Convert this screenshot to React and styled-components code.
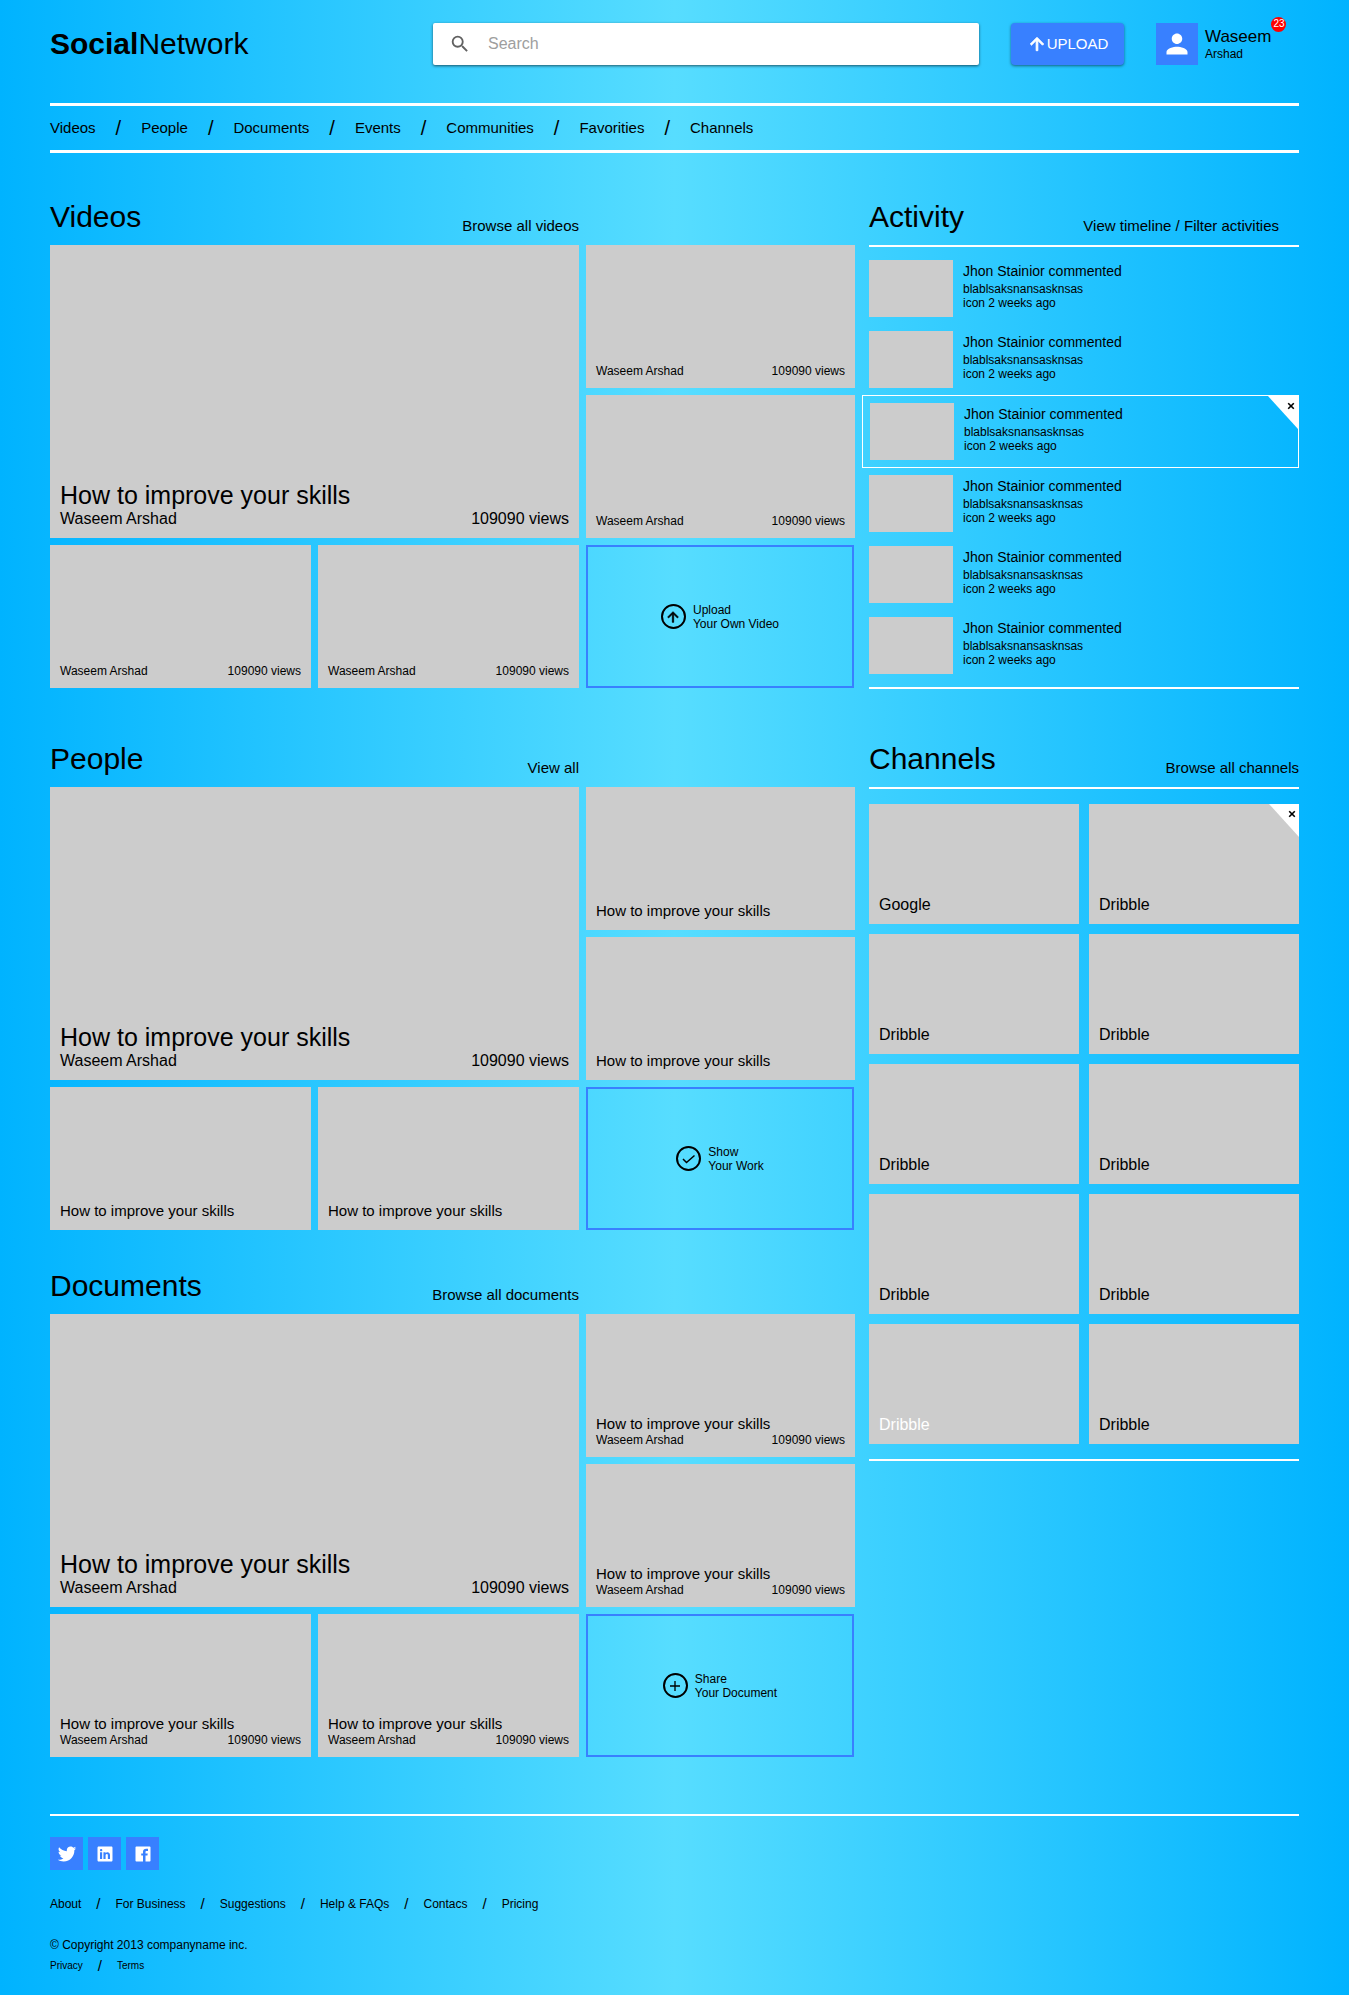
import React from 'react';
import styled, { createGlobalStyle, css } from 'styled-components';
import {
  IoMdArrowUp, IoMdPerson, IoMdAdd,
  IoLogoTwitter, IoLogoLinkedin, IoLogoFacebook,
} from 'react-icons/io';
import { MdSearch } from 'react-icons/md';

const color = { tile: '#ccc', accent: '#3880ff', line: '#fff', text: '#000' };

const GlobalStyle = createGlobalStyle`
  *, *::before, *::after { box-sizing: border-box; }
  body {
    margin: 0;
    font-family: "Liberation Sans", Arial, sans-serif;
    font-size: 16px;
    color: ${color.text};
    background: linear-gradient(to right, #00b3ff, #57ddff, #00b3ff);
  }
  a { color: inherit; text-decoration: none; }
  h1, h2, h3, p, ul { margin: 0; padding: 0; font-weight: 400; }
  ul { list-style: none; }
  button { font: inherit; color: inherit; border: 0; padding: 0; cursor: pointer; }
`;

const Page = styled.div`
  padding: 0 50px 20px;
`;

const Header = styled.header`
  display: grid;
  grid-template-columns: 351fr 546fr 113px 143px;
  gap: 32px;
  align-items: center;
  padding: 23px 0 38px;
`;

const Logo = styled.h1`
  font-size: 30px;
  line-height: 34px;
`;

const SearchBar = styled.form`
  display: flex;
  align-items: center;
  gap: 17px;
  height: 42px;
  padding: 0 16px;
  background: #fff;
  border-radius: 2px;
  box-shadow: 0 1px 3px rgba(0, 0, 0, 0.6);
  color: #616161;
  svg { flex: none; }
`;

const SearchInput = styled.input`
  flex: 1;
  min-width: 0;
  height: 40px;
  border: 0;
  outline: 0;
  padding: 0;
  background: transparent;
  font: inherit;
  &::placeholder { color: #9e9e9e; opacity: 1; }
`;

const UploadButton = styled.button`
  display: flex;
  align-items: center;
  justify-content: center;
  height: 42px;
  && { color: #fff; padding-bottom: 1px; }
  font-size: 15px;
  background: ${color.accent};
  border-radius: 4px;
  box-shadow: 0 1px 3px rgba(0, 0, 0, 0.5);
`;

const ArrowUp = styled(IoMdArrowUp)`
  stroke: currentColor;
  stroke-width: 24;
`;

const User = styled.a`
  display: flex;
  align-items: center;
  gap: 7px;
`;

const Avatar = styled.span`
  display: grid;
  place-items: center;
  width: 42px;
  height: 42px;
  color: #fff;
  background: ${color.accent};
`;

const UserName = styled.span`
  position: relative;
  font-size: 17px;
  line-height: 20px;
  small { display: block; font-size: 12px; line-height: 14px; }
`;

const Badge = styled.span`
  position: absolute;
  left: 100%;
  top: -10px;
  width: 15px;
  height: 15px;
  border-radius: 50%;
  background: red;
  color: #fff;
  font-size: 10px;
  line-height: 14px;
  text-align: center;
`;

const LinkList = styled.ul`
  display: flex;
  align-items: center;
  font-size: ${(p) => p.$size}px;
  line-height: 18px;
  li { display: flex; align-items: center; }
  li + li::before {
    content: "/";
    margin: 0 ${(p) => p.$gap}px;
    font-size: ${(p) => p.$slash}px;
  }
`;

const MainNav = styled.nav`
  border: solid ${color.line};
  border-width: 3px 0;
  padding: 13px 0;
`;

const Columns = styled.div`
  display: grid;
  grid-template-columns: 805fr 430fr;
  gap: 14px;
  align-items: start;
  padding-top: 39px;
`;

const Column = styled.div`
  display: flex;
  flex-direction: column;
`;

const Section = styled.section`
  margin-top: ${(p) => p.$space || 0}px;
`;

const Head = styled.div`
  display: flex;
  justify-content: space-between;
  align-items: flex-end;
  height: 53px;
  padding-bottom: 10px;
`;

const Title = styled.h2`
  font-size: 30px;
  line-height: 36px;
`;

const HeadLinks = styled.div`
  font-size: 15px;
  line-height: 19px;
  padding-right: ${(p) => p.$inset || 0}px;
`;

const Mosaic = styled.div`
  display: grid;
  grid-template-columns: 261fr 261fr 269fr;
  grid-auto-rows: 143px;
  gap: 7px;
`;

const MosaicHead = styled(Mosaic)`
  grid-auto-rows: auto;
  ${Head} { grid-column: span 2; }
`;

const Tile = styled.a`
  position: relative;
  display: flex;
  flex-direction: column;
  justify-content: flex-end;
  padding: 10px;
  background: ${color.tile};
  ${(p) => p.$big && css`grid-area: span 2 / span 2;`}
  ${(p) => p.$light && css`color: #fff;`}
`;

const TileTitle = styled.h3`
  font-size: ${(p) => (p.$big ? 25 : 15)}px;
  line-height: ${(p) => (p.$big ? 30 : 19)}px;
`;

const Meta = styled.p`
  display: flex;
  justify-content: space-between;
  font-size: ${(p) => (p.$big ? 16 : 12)}px;
  line-height: ${(p) => (p.$big ? 18 : 14)}px;
`;

const ActionTile = styled.button`
  display: flex;
  align-items: center;
  justify-content: center;
  gap: 7px;
  margin-right: 1px;
  text-align: left;
  background: transparent;
  && { border: 2px solid ${color.accent}; font-size: 12px; }
  line-height: 14px;
`;

const Ring = styled.span`
  display: grid;
  place-items: center;
  width: 25px;
  height: 25px;
  border: 2px solid ${color.text};
  border-radius: 50%;
`;

const Ruled = styled.div`
  border: solid ${color.line};
  border-width: 2px 0;
  padding: ${(p) => p.$pad}px 0;
`;

const ActivityItem = styled.li`
  position: relative;
  display: flex;
  gap: 10px;
  padding: 7px 0;
  ${(p) => p.$active && css`
    margin-left: -7px;
    padding: 7px;
    border: 1px solid ${color.line};
  `}
`;

const Thumb = styled.span`
  width: 84px;
  height: 57px;
  background: ${color.tile};
`;

const ActivityText = styled.div`
  padding-top: 2px;
  font-size: 12px;
  line-height: 14px;
  h3 { font-size: 14px; line-height: 18px; margin-bottom: 2px; }
`;

const CloseCorner = styled.button`
  position: absolute;
  top: 0;
  right: 0;
  width: 30px;
  height: 33px;
  display: flex;
  justify-content: flex-end;
  && { padding: 5px 2px; }
  background: #fff;
  clip-path: polygon(0 0, 100% 0, 100% 100%);
`;

const ChannelGrid = styled.ul`
  display: grid;
  grid-template-columns: 1fr 1fr;
  grid-auto-rows: 120px;
  gap: 10px;
  li { position: relative; display: grid; }
`;

const Footer = styled.footer`
  margin-top: 57px;
  padding-top: 21px;
  border-top: 2px solid ${color.line};
`;

const Socials = styled.div`
  display: flex;
  gap: 5px;
  a {
    display: grid;
    place-items: center;
    width: 33px;
    height: 33px;
    color: #fff;
    background: ${color.accent};
  }
`;

const FooterNav = styled.nav`
  padding: 25px 0;
`;

const Copyright = styled.p`
  font-size: 12px;
  line-height: 14px;
  margin-bottom: 5px;
`;

function Links({ items, ...sizes }) {
  return (
    <LinkList {...sizes}>
      {items.map((item) => <li key={item}><a href="#">{item}</a></li>)}
    </LinkList>
  );
}

function MediaTile({ title, meta, big }) {
  return (
    <Tile href="#" $big={big}>
      {title && <TileTitle $big={big}>How to improve your skills</TileTitle>}
      {meta && <Meta $big={big}><span>Waseem Arshad</span><span>109090 views</span></Meta>}
    </Tile>
  );
}

function MediaSection({ name, link, title, meta, icon, action, space }) {
  return (
    <Section $space={space}>
      <MosaicHead>
        <Head>
          <Title>{name}</Title>
          <HeadLinks><a href="#">{link}</a></HeadLinks>
        </Head>
      </MosaicHead>
      <Mosaic>
        <MediaTile big title meta />
        {[0, 1, 2, 3].map((i) => <MediaTile key={i} title={title} meta={meta} />)}
        <ActionTile type="button">
          <Ring>{icon}</Ring>
          <span>{action[0]}<br />{action[1]}</span>
        </ActionTile>
      </Mosaic>
    </Section>
  );
}

function CheckMark() {
  return (
    <svg width="14" height="14" viewBox="0 0 14 14" fill="none" stroke="currentColor" strokeWidth="1.5">
      <path d="M1 7 4.5 10.5 12.5 3.5" />
    </svg>
  );
}

function Close() {
  return (
    <CloseCorner type="button" aria-label="Close">
      <svg width="10" height="10" viewBox="0 0 10 10" fill="none" stroke="currentColor" strokeWidth="1.6">
        <path d="M2.2 2.2 7.8 7.8M7.8 2.2 2.2 7.8" />
      </svg>
    </CloseCorner>
  );
}

const channels = ['Google', ...Array(9).fill('Dribble')];

export default function App() {
  return (
    <>
      <GlobalStyle />
      <Page>
        <Header>
          <Logo><b>Social</b>Network</Logo>
          <SearchBar role="search">
            <MdSearch size={22} />
            <SearchInput type="text" placeholder="Search" aria-label="Search" />
          </SearchBar>
          <UploadButton type="button"><ArrowUp size={20} />UPLOAD</UploadButton>
          <User href="#">
            <Avatar><IoMdPerson size={28} /></Avatar>
            <UserName>Waseem<small>Arshad</small><Badge>23</Badge></UserName>
          </User>
        </Header>
        <MainNav>
          <Links
            $size={15} $slash={20} $gap={20}
            items={['Videos', 'People', 'Documents', 'Events', 'Communities', 'Favorities', 'Channels']}
          />
        </MainNav>
        <Columns>
          <Column>
            <MediaSection
              name="Videos" link="Browse all videos" meta
              icon={<ArrowUp size={16} />} action={['Upload', 'Your Own Video']}
            />
            <MediaSection
              name="People" link="View all" title space={46}
              icon={<CheckMark />} action={['Show', 'Your Work']}
            />
            <MediaSection
              name="Documents" link="Browse all documents" title meta space={31}
              icon={<IoMdAdd size={16} />} action={['Share', 'Your Document']}
            />
          </Column>
          <Column>
            <Section>
              <Head>
                <Title>Activity</Title>
                <HeadLinks $inset={20}><a href="#">View timeline</a> / <a href="#">Filter activities</a></HeadLinks>
              </Head>
              <Ruled as="ul" $pad={6}>
                {[0, 1, 2, 3, 4, 5].map((i) => (
                  <ActivityItem key={i} $active={i === 2}>
                    <Thumb />
                    <ActivityText>
                      <h3>Jhon Stainior commented</h3>
                      <p>blablsaksnansasknsas</p>
                      <p>icon 2 weeks ago</p>
                    </ActivityText>
                    {i === 2 && <Close />}
                  </ActivityItem>
                ))}
              </Ruled>
            </Section>
            <Section $space={45}>
              <Head>
                <Title>Channels</Title>
                <HeadLinks><a href="#">Browse all channels</a></HeadLinks>
              </Head>
              <Ruled $pad={15}>
                <ChannelGrid>
                  {channels.map((name, i) => (
                    <li key={i}>
                      <Tile href="#" $light={i === 8}><Meta $big>{name}</Meta></Tile>
                      {i === 1 && <Close />}
                    </li>
                  ))}
                </ChannelGrid>
              </Ruled>
            </Section>
          </Column>
        </Columns>
        <Footer>
          <Socials>
            <a href="#" aria-label="Twitter"><IoLogoTwitter size={20} /></a>
            <a href="#" aria-label="LinkedIn"><IoLogoLinkedin size={20} /></a>
            <a href="#" aria-label="Facebook"><IoLogoFacebook size={20} /></a>
          </Socials>
          <FooterNav>
            <Links
              $size={12} $slash={15} $gap={15}
              items={['About', 'For Business', 'Suggestions', 'Help & FAQs', 'Contacs', 'Pricing']}
            />
          </FooterNav>
          <Copyright>© Copyright 2013 companyname inc.</Copyright>
          <Links $size={10} $slash={15} $gap={15} items={['Privacy', 'Terms']} />
        </Footer>
      </Page>
    </>
  );
}
